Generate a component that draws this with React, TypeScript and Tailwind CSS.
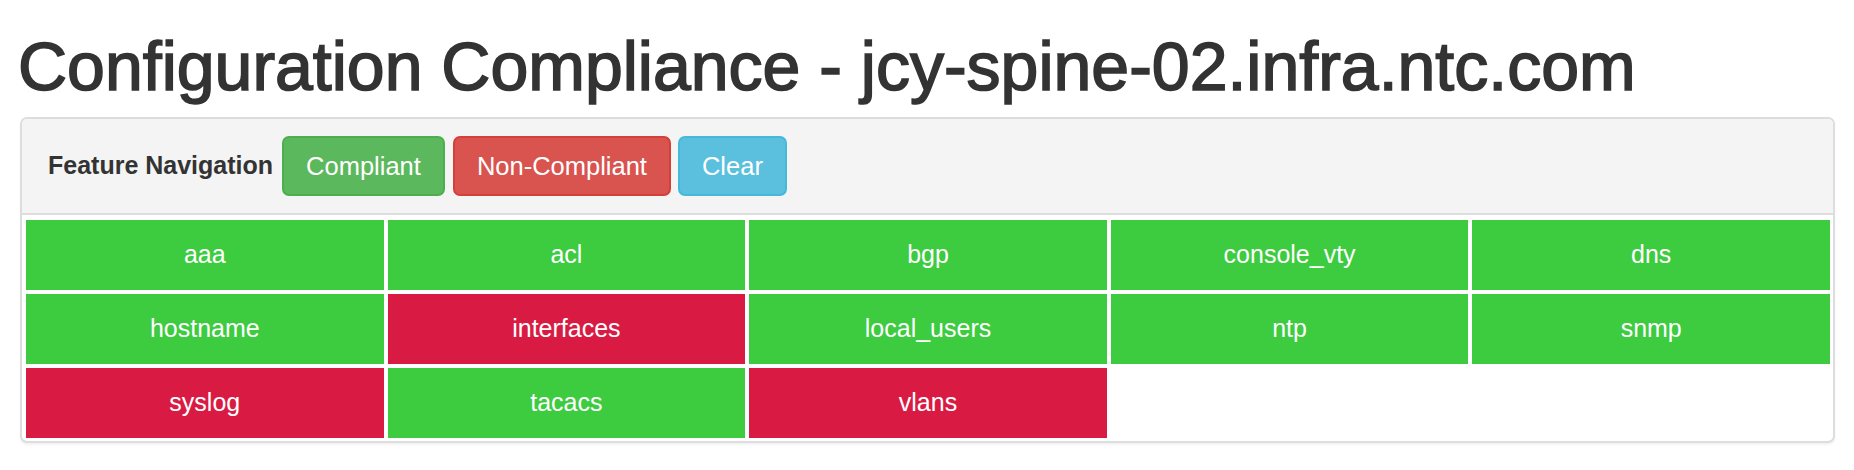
const features: { name: string; ok: boolean }[] = [
  { name: "aaa", ok: true },
  { name: "acl", ok: true },
  { name: "bgp", ok: true },
  { name: "console_vty", ok: true },
  { name: "dns", ok: true },
  { name: "hostname", ok: true },
  { name: "interfaces", ok: false },
  { name: "local_users", ok: true },
  { name: "ntp", ok: true },
  { name: "snmp", ok: true },
  { name: "syslog", ok: false },
  { name: "tacacs", ok: true },
  { name: "vlans", ok: false },
];

export default function App() {
  return (
    <div
      className="min-h-[470px] bg-white pl-[20px] pr-[19px] text-[#333]"
      style={{ fontFamily: '"Liberation Sans", Arial, Helvetica, sans-serif' }}
    >
      <h1 className="-ml-[2px] pt-[29px] text-[68px] leading-[75px] font-normal [-webkit-text-stroke:1.6px_#333]">
        Configuration Compliance - jcy-spine-02.infra.ntc.com
      </h1>

      <div className="mt-[13px] rounded-[7px] border-2 border-[#ddd] bg-white shadow-[0_2px_2px_rgba(0,0,0,0.05)]">
        {/* Header */}
        <div className="flex h-[96px] items-center rounded-t-[5px] border-b-2 border-[#ddd] bg-[#f4f4f4] pl-[26px]">
          <span className="text-[25px] font-bold">Feature Navigation</span>
          <button className="ml-[9px] flex h-[60px] items-center rounded-[7px] border-2 border-[#4cae4c] bg-[#5cb85c] px-[22px] text-[25.5px] text-white">
            Compliant
          </button>
          <button className="ml-[8px] flex h-[60px] items-center rounded-[7px] border-2 border-[#d43f3a] bg-[#d9534f] px-[22px] text-[25.5px] text-white">
            Non-Compliant
          </button>
          <button className="ml-[7px] flex h-[60px] items-center rounded-[7px] border-2 border-[#46b8da] bg-[#5bc0de] px-[22px] text-[25.5px] text-white">
            Clear
          </button>
        </div>

        {/* Feature grid */}
        <div className="grid grid-cols-5 gap-[4px] pt-[5px] pb-[3px] pl-[4px] pr-[3px]">
          {features.map((f) => (
            <div
              key={f.name}
              className={
                f.ok
                  ? "flex h-[70px] items-center justify-center bg-[#3dcb40] text-[25px] text-white"
                  : "flex h-[70px] items-center justify-center bg-[#d91b43] text-[25px] text-white"
              }
            >
              {f.name}
            </div>
          ))}
        </div>
      </div>
    </div>
  );
}
